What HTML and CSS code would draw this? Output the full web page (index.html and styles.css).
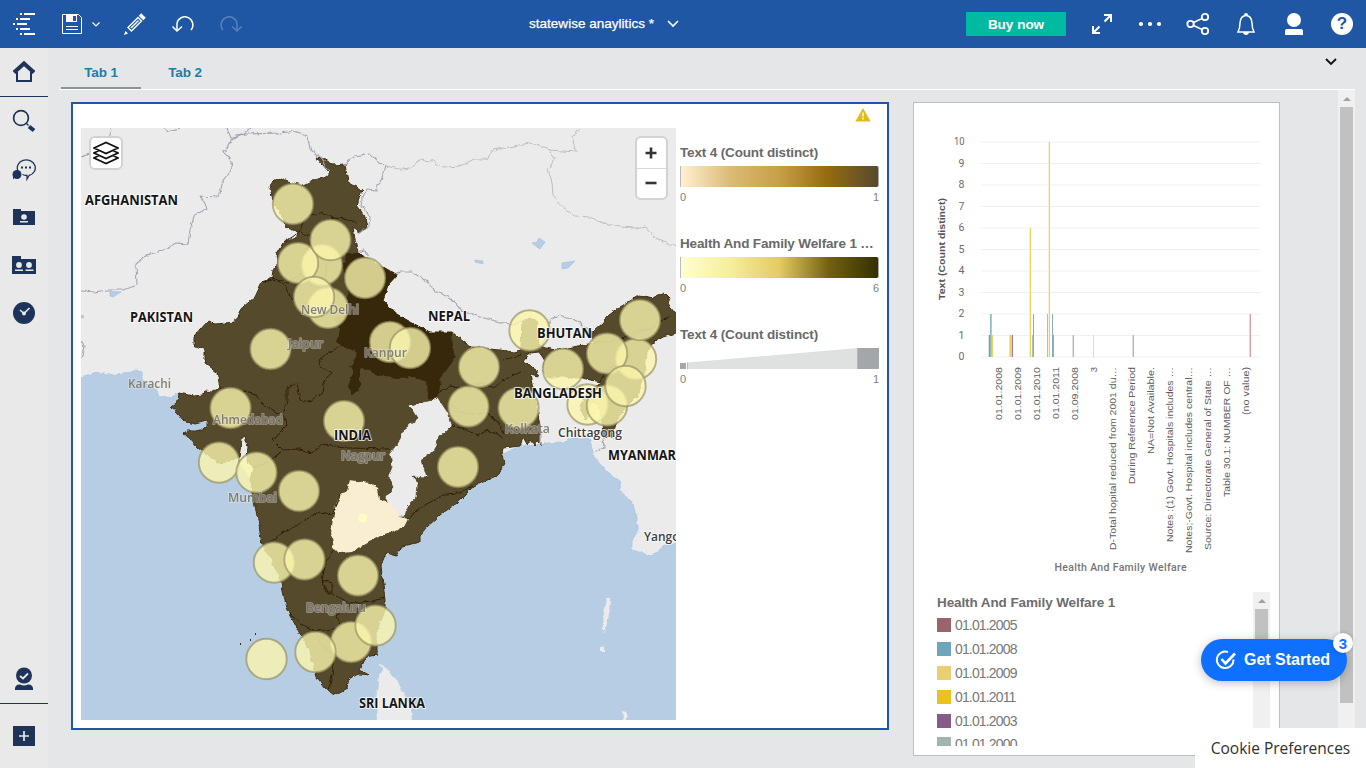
FILE: index.html
```html
<!DOCTYPE html>
<html lang="en">
<head>
<meta charset="utf-8">
<title>statewise anaylitics</title>
<link rel="stylesheet" href="styles.css">
</head>
<body>
<div class="app">
  <header class="topbar">
    <button class="cell"><svg width="24" height="24" viewBox="0 0 24 24" fill="#fff"><path d="M8 1h2v2H8zM12 1h11v2H12zM4 6h2v2H4zM8 6h10v2H8zM1 11h2v2H1zM5 11h10v2H5zM4 16h2v2H4zM8 16h10v2H8zM8 21h2v2H8zM12 21h11v2H12z"/></svg></button>
    <button class="cell save"><svg width="20" height="20" viewBox="0 0 20 20"><path d="M.5.5h16l3 3v16H.5z" fill="none" stroke="#fff"/><path d="M4 1h11v7H4z" fill="#fff"/><path d="M11 2h3v5h-3z" fill="#1f57a4"/><path d="M4 12.5h12M4 15.5h12" stroke="#fff"/></svg><svg width="8" height="5" viewBox="0 0 8 5"><path d="M.5.5 4 4 7.500.5" fill="none" stroke="#fff" stroke-width="1.2"/></svg></button>
    <button class="cell"><svg width="24" height="24" viewBox="0 0 24 24" fill="none" stroke="#fff" stroke-width="1.400"><path d="m5 15.500 10-10 3.500 3.500-10 10z"/><path d="m8 16 7.500-7.500"/><path d="m17 2.500 4.500 4.500" stroke-width="3.600"/><path d="m2.500 19 2.500 2.500-4 1.500z" fill="#fff" stroke="none"/></svg></button>
    <button class="cell"><svg width="24" height="20" viewBox="0 0 24 20" fill="none" stroke="#fff" stroke-width="1.5"><path d="M6 17V9.500a8 8 0 1 1 14 6.500"/><path d="m1.500 12.500 4.500 4.500 5-4.500"/></svg></button>
    <button class="cell disabled"><svg width="24" height="20" viewBox="0 0 24 20" fill="none" stroke="#fff" stroke-width="1.5"><path d="M18 17V9.500A8 8 0 1 0 4 16"/><path d="m22.500 12.500-4.500 4.500-5-4.500"/></svg></button>
    <div class="title"><span>statewise anaylitics *</span><svg width="12" height="8" viewBox="0 0 12 8"><path d="m1 1 5 5 5-5" fill="none" stroke="#fff" stroke-width="1.6"/></svg></div>
    <button class="buy">Buy now</button>
    <button class="cell"><svg width="20" height="20" viewBox="0 0 20 20" fill="none" stroke="#fff" stroke-width="2"><path d="M12 1h7v7M19 1l-6.500 6.500M1 12v7h7M1 19l6.500-6.500"/></svg></button>
    <button class="cell"><svg width="24" height="6" viewBox="0 0 24 6" fill="#fff"><circle cx="3" cy="3" r="2.100"/><circle cx="12" cy="3" r="2.100"/><circle cx="21" cy="3" r="2.100"/></svg></button>
    <button class="cell"><svg width="24" height="24" viewBox="0 0 24 24" fill="none" stroke="#fff" stroke-width="1.800"><circle cx="4.500" cy="12" r="3.200"/><circle cx="19" cy="5" r="3.200"/><circle cx="19" cy="19" r="3.200"/><path d="m7.500 10.500 8.500-4M7.500 13.500l8.500 4"/></svg></button>
    <button class="cell"><svg width="20" height="24" viewBox="0 0 20 24"><path d="M2 20c1.500-3 2-5 2-9 0-5 3-7.500 6-7.500s6 2.500 6 7.500c0 4 .5 6 2 9z" fill="none" stroke="#fff" stroke-width="1.500"/><path d="M8 3a2 2 0 0 1 4 0M7 20h6c0 4-6 4-6 0" fill="#fff"/></svg></button>
    <button class="cell"><svg width="20" height="24" viewBox="0 0 20 24" fill="#fff"><circle cx="10" cy="8" r="7"/><path d="M1 23v-4q0-2 2-2h14q2 0 2 2v4z"/></svg></button>
    <button class="cell"><span class="help">?</span></button>
  </header>
  <div class="body">
    <nav class="sidebar">
      <a class="nav home"><svg width="24" height="24" viewBox="0 0 24 24"><path d="M5 12v9h14V12" fill="none" stroke="#1d3458" stroke-width="2"/><path d="m2 12.500 10-9 10 9" fill="none" stroke="#1d3458" stroke-width="4"/></svg></a>
      <a class="nav"><svg width="24" height="24" viewBox="0 0 24 24" fill="none" stroke="#1d3458"><circle cx="9" cy="9" r="7.400" stroke-width="1.700"/><path d="m14.500 14.500 2 2" stroke-width="1.500"/><path d="m17 17.500 5 4" stroke-width="4"/></svg></a>
      <a class="nav"><svg width="24" height="24" viewBox="0 0 24 24"><path d="M17 18.500A9 8 0 1 0 6 14M17 18.500l-2 3.500v-3.500c-2 0-3-.3-4.500-1" fill="none" stroke="#1d3458" stroke-width="1.300"/><circle cx="5" cy="17.500" r="4.500" fill="#1d3458"/><path d="M1 22.500V18h4z" fill="#1d3458"/><path d="M9 9.500h2v2H9zM13 9.500h2v2h-2zM17 9.500h2v2h-2z" fill="#1d3458"/></svg></a>
      <a class="nav"><svg width="22" height="16" viewBox="0 0 22 16"><path d="M0 0h8v2h14v14H0z" fill="#1d3458"/><circle cx="11" cy="8" r="2.800" fill="#e9e9e9"/><path d="M7 12h8v1.500H7z" fill="#e9e9e9"/></svg></a>
      <a class="nav"><svg width="24" height="18" viewBox="0 0 24 18"><path d="M0 0h9v3h15v15H0z" fill="#1d3458"/><circle cx="7" cy="9" r="2.900" fill="#e9e9e9"/><circle cx="17" cy="9" r="2.900" fill="#e9e9e9"/><path d="M3 13.500h8V15H3zM13.500 13.500h8V15h-8z" fill="#e9e9e9"/></svg></a>
      <a class="nav"><svg width="24" height="24" viewBox="0 0 24 24"><circle cx="12" cy="12" r="11" fill="#1d3458"/><path d="m8 9 4 3.500L17.500 7" fill="none" stroke="#e9e9e9" stroke-width="1.600"/><circle cx="12" cy="12.500" r="2" fill="#e9e9e9"/></svg></a>
      <a class="nav learn"><svg width="20" height="24" viewBox="0 0 20 24"><circle cx="10" cy="8.500" r="8" fill="#1d3458"/><path d="m6 9 3 2.500 5-5" fill="none" stroke="#e9e9e9" stroke-width="1.800"/><path d="M1 23v-2q1-4 5-3.500 4 2 8 0 4-.5 5 3.500v2z" fill="#1d3458"/></svg></a>
      <a class="nav add"><svg width="22" height="20" viewBox="0 0 22 20"><path d="M0 0h22v20H0z" fill="#1d3458"/><path d="M11 5v10M6 10h10" stroke="#e9e9e9" stroke-width="1.700"/></svg></a>
    </nav>
    <main class="main">
      <div class="tabs">
        <a class="tab active">Tab 1</a><a class="tab">Tab 2</a>
        <svg class="more" width="12" height="8" viewBox="0 0 12 8"><path d="m1 1 5 5 5-5" fill="none" stroke="#111" stroke-width="1.800"/></svg>
      </div>
      <div class="stage">
        <section class="card mapcard">
          <svg class="warn" width="16" height="14" viewBox="0 0 16 14"><path d="M8 0 15.700 13.500H.3z" fill="#e2bb19"/><path d="M7 4.500h2v4H7zM7 9.500h2v2H7z" fill="#f6e9b0"/></svg>
          <div class="mapwrap">
            <svg class="map" width="595" height="592" viewBox="81 128 595 592">
              <defs>
                <filter id="rough" filterUnits="userSpaceOnUse" x="71" y="118" width="615" height="612" color-interpolation-filters="sRGB"><feTurbulence type="fractalNoise" baseFrequency=".16" numOctaves="3" seed="4"/><feDisplacementMap in="SourceGraphic" scale="4.500" xChannelSelector="R" yChannelSelector="G"/></filter>
              </defs>
              <rect x="81" y="128" width="595" height="592" fill="#b6cde3"/>
              <g filter="url(#rough)">
                <path fill="#ebebeb" stroke="#a4c4e6" stroke-width=".8" d="M71 118H690V540L676 543 671 545 663 547 657 552 651 556 639 552 632 550 632 543 637 532 637 517 632 502 619 490 622 482 608 473 594 457 590 440 587 438 570 438 562 442 547 443 541 445 520 446 400 500 250 480 200 400 179 393 170 397 159 398 157 390 143 382 142 372 137 369 132 372 117 374 107 375 97 372 81 377 71 377Z"/>
                <path fill="#ebebeb" d="M379 664Q386 664 388 672L398 682 405 696 411 706 412 722H377L376 700 379 675 383 669Z"/>
                <path fill="#ebebeb" d="M607 598 610 598 609 615 605 632 602 630 604 613ZM600 646h4v6h-4ZM622 711l5 1v8h-4Z"/>
                <path fill="#564a2d" stroke="#40300f" stroke-width="1" d="M541 445 537 441 534 445 530 440 527 445 523 438 520 446 503 448 502 455 504 463 498 475 483 482 472 488 457 503 440 515 426 528 420 535 420 542 402 546 396 556 386 553 381 565 382 577 385 600 385 610 377 630 377 655 366 657 360 670 369 675 360 674 349 678 347 688 334 695 325 688 317 677 309 650 299 632 289 613 285 600 281 582 270 557 262 545 258 520 253 497 250 480 253 468 247 460 248 447 245 436 242 438 239 457 227 462 217 463 198 448 184 433 187 431 197 431 207 427 207 421 195 424 183 420 173 408 170 407 178 402 179 393 193 396 204 395 205 391 212 392 220 388 217 372 205 363 205 350 194 345 194 337 208 321 215 324 235 322 243 307 255 297 262 282 272 278 273 270 278 263 277 253 283 243 297 237 298 232 285 227 283 217 273 203 272 195 269 187 274 180 283 179 293 183 303 185 313 180 325 178 329 172 316 157 323 159 333 165 345 164 348 182 362 190 357 205 365 217 367 228 360 232 353 227 355 240 358 253 385 268 397 275 388 285 383 300 395 313 407 320 420 327 430 332 452 332 470 347 500 350 513 352 521 350 522 322 530 318 537 322 540 347 557 350 583 345 594 343 588 330 593 332 603 323 605 318 620 307 640 295 653 298 665 293 670 298 668 303 672 310 684 316 684 330 676 333 663 337 653 343 647 353 645 370 637 397 627 407 617 420 612 438 603 437 602 423 599 405 592 402 585 420 580 407 586 394 600 382 577 377 547 377 543 367 545 360 540 352 530 353 523 362 537 370 538 377 530 375 537 407 540 427Z"/>
                <path fill="#38280b" d="M347 253 358 253 385 268 397 275 388 285 383 300 395 313 407 320 420 327 430 332 452 332 453 347 455 358 442 375 438 398 428 400 427 382 413 377 397 378 377 375 360 367 360 387 353 395 348 387 353 372 350 367 358 353 337 343 340 330 333 318 347 313 348 287 343 267Z"/>
                <path fill="#ebebeb" stroke="#40300f" stroke-width=".6" d="M408 405 428 402 438 398 448 413 452 425 440 437 432 453 422 460 427 478 413 477 418 483 417 497 407 507 405 517 398 517 385 498 393 487 388 477 392 467 390 453 400 440 403 430 418 418 413 410Z"/>
                <path fill="#faeed2" d="M350 480 370 483 378 488 380 500 390 502 395 510 400 517 408 519 404 527 382 535 364 545 353 552 339 553 334 548 331 533 333 520 335 507 342 493 347 490Z"/>
                <g fill="none" stroke="#302006" stroke-width="1">
                  <path d="M298 234 305 218 320 213 334 218 347 219 357 223M283 243 300 232 312 238 305 252 313 262M262 282 273 280 285 285 293 300M272 278 288 283 300 274 312 287M347 253 338 256 327 263 325 280M220 388 238 390 254 393 262 403 272 410 283 415 287 425 280 432 273 440 283 450 300 449 312 453 322 444 335 447 350 448 390 449M283 415 287 400 287 388 297 383 300 400 310 402 323 392 325 379 332 373 318 366 321 358 345 342M253 468 265 465 272 459 281 452M262 545 275 540 281 532 291 530 303 521 320 512 333 514 341 495M334 548 326 563 322 580 328 592 340 598 350 603 372 601 385 598M289 613 301 624 315 631 326 630 341 628 337 616 350 605M315 631 322 645 334 655 333 670 329 690M322 580 332 583 332 592 326 592ZM452 425 465 430 478 435 488 430 504 438M438 393 450 386 465 390 480 383 495 388 505 379 520 372M450 405 465 414 485 413 498 421 505 434M407 519 425 505 445 494 460 493 472 486M504 360 521 355M594 343 615 341 635 333 652 327 672 315M600 382 606 370 622 362 635 351M622 362 631 377 642 381M585 420 600 407 616 402"/>
                </g>
              </g>
              <g class="borders" filter="url(#rough)">
                <path d="M81 291 95 292 107 290 124 290 137 285 136 264 147 255 162 251 176 243 188 244 190 230 194 216 207 208 200 196 218 197 222 182 232 168 230 158 224 152 233 139 245 134 280 133 295 131 308 137 312 151 320 157 329 171M227 128 231 138 243 134 253 126M165 128 168 132 179 129M81 157 90 154 108 148 111 128M81 340 84 347 81 358M345 164 354 156 370 154 380 164 385 166 382 178 376 190 366 189 362 198 361 205 370 217 369 227 360 232M358 252 364 250 370 258M397 275 400 272 412 272 426 281 437 292 446 296 454 302 462 311 476 316 500 322 514 325 525 320M542 347 550 320 560 315 580 323 588 331M541 445V430M603 437 604 448 596 451"/>
                <path class="light" d="M385 166 400 169 410 168 420 160 433 161 442 167 460 166 474 159 487 159 493 150 530 143 550 150 555 158 548 170 552 182 553 195 565 210 575 216 590 217 600 222 620 227 636 228 645 226 653 237 670 245 690 246M550 150 576 152 572 137 580 128"/>
              </g>
              <g fill="#b6cde3" stroke="#9cbfe4" stroke-width=".6"><path d="m110 291 11 1-8 5-3-1ZM532 243l5-1 2-4 6 4-5 7-3-2ZM475 260l8 1v3l-8-2ZM562 263l13-2-7 7-6 1ZM81 315l3 1-1 2h-2Z"/></g>
              <g fill="#40300f"><path d="M240 643h1v2h-1ZM250 639h1v2h-1ZM255 633h1v2h-1Z"/></g>
              <g class="bubbles"><circle cx="293" cy="204" r="20.200"/><circle cx="322" cy="265" r="20.200"/><circle cx="298" cy="263" r="20.200"/><circle cx="330.500" cy="240" r="20.200"/><circle cx="365" cy="278" r="20.200"/><circle cx="328" cy="308" r="20.200"/><circle cx="314" cy="297" r="20.200"/><circle cx="270.500" cy="349" r="20.200"/><circle cx="230.500" cy="408" r="20.200"/><circle cx="219" cy="462.500" r="20.200"/><circle cx="256.500" cy="472.500" r="20.200"/><circle cx="299" cy="491" r="20.200"/><circle cx="344" cy="421" r="20.200"/><circle cx="390" cy="342" r="20.200"/><circle cx="410" cy="348" r="20.200"/><circle cx="529.500" cy="330.500" r="20.200"/><circle cx="479" cy="367" r="20.200"/><circle cx="468.500" cy="406.500" r="20.200"/><circle cx="518.500" cy="408" r="20.200"/><circle cx="563" cy="369" r="20.200"/><circle cx="636" cy="359" r="20.200"/><circle cx="607" cy="353.500" r="20.200"/><circle cx="640" cy="320" r="20.200"/><circle cx="587.500" cy="404.500" r="20.200"/><circle cx="607" cy="405.500" r="20.200"/><circle cx="625.500" cy="386" r="20.200"/><circle cx="458" cy="467" r="20.200"/><circle cx="274" cy="562.500" r="20.200"/><circle cx="304.500" cy="559.500" r="20.200"/><circle cx="358" cy="575.500" r="20.200"/><circle cx="351" cy="642" r="20.200"/><circle cx="375.500" cy="625.500" r="20.200"/><circle cx="315.500" cy="652" r="20.200"/><circle cx="266.500" cy="659" r="20.200"/></g>
              <circle cx="362.500" cy="518" r="4.500" fill="#fffcc4"/>
              <g class="cities"><text x="301" y="313.500" textLength="58" lengthAdjust="spacingAndGlyphs">New Delhi</text><text x="288" y="348" textLength="35" lengthAdjust="spacingAndGlyphs">Jaipur</text><text x="364" y="357" textLength="43" lengthAdjust="spacingAndGlyphs">Kanpur</text><text x="128" y="388" textLength="43" lengthAdjust="spacingAndGlyphs">Karachi</text><text x="213" y="424" textLength="70" lengthAdjust="spacingAndGlyphs">Ahmedabad</text><text x="341" y="460" textLength="44" lengthAdjust="spacingAndGlyphs">Nagpur</text><text x="228" y="501.500" textLength="49" lengthAdjust="spacingAndGlyphs">Mumbai</text><text x="505" y="433" textLength="45" lengthAdjust="spacingAndGlyphs">Kolkata</text><text x="306" y="611.500" textLength="60" lengthAdjust="spacingAndGlyphs">Bengaluru</text></g>
              <g class="countries"><text x="85" y="205" textLength="93" lengthAdjust="spacingAndGlyphs">AFGHANISTAN</text><text x="130" y="322" textLength="63" lengthAdjust="spacingAndGlyphs">PAKISTAN</text><text x="428" y="321" textLength="42" lengthAdjust="spacingAndGlyphs">NEPAL</text><text x="537" y="338" textLength="55" lengthAdjust="spacingAndGlyphs">BHUTAN</text><text x="514" y="398" textLength="88" lengthAdjust="spacingAndGlyphs">BANGLADESH</text><text x="334" y="440" textLength="37" lengthAdjust="spacingAndGlyphs">INDIA</text><text x="608" y="459.500" textLength="68" lengthAdjust="spacingAndGlyphs">MYANMAR</text><text x="359" y="708" textLength="66" lengthAdjust="spacingAndGlyphs">SRI LANKA</text><text class="town" x="558" y="437" textLength="64" lengthAdjust="spacingAndGlyphs">Chittagong</text><text class="town" x="644" y="541" textLength="43" lengthAdjust="spacingAndGlyphs">Yangon</text></g>
            </svg>
            <button class="layers"><svg width="26" height="24" viewBox="0 0 26 24" fill="none" stroke="#111" stroke-width="1.800"><path d="M1 7 13 1.500 25 7l-12 5.500zM6 9.500 1 12l12 5.500L25 12l-5-2.500M6 14.500 1 17l12 5.500L25 17l-5-2.500"/></svg></button>
            <div class="zoom"><button><svg width="12" height="12" viewBox="0 0 12 12"><path d="M6 .5v11M.5 6h11" stroke="#333" stroke-width="2.600"/></svg></button><button><svg width="12" height="12" viewBox="0 0 12 12"><path d="M.5 6h11" stroke="#333" stroke-width="2.600"/></svg></button></div>
          </div>
          <div class="legends">
            <div class="legend"><h3>Text 4 (Count distinct)</h3><div class="ramp ramp-a"></div><div class="ends"><span>0</span><span>1</span></div></div>
            <div class="legend"><h3>Health And Family Welfare 1 …</h3><div class="ramp ramp-b"></div><div class="ends"><span>0</span><span>6</span></div></div>
            <div class="legend"><h3>Text 4 (Count distinct)</h3><svg class="size" width="199" height="21" viewBox="0 0 199 21"><path d="M7 14.500 178 0v21H7z" fill="#dfe1e1"/><path d="M7.500 14.500V21M177.500 0v21" stroke="#b5b8b9"/><path d="M0 15h6v6H0zM178 0h21v21h-21z" fill="#a4a7aa"/></svg><div class="ends"><span>0</span><span>1</span></div></div>
          </div>
        </section>
        <section class="card chartcard">
          <svg class="chart" width="365" height="484" viewBox="914 103 365 484">
            <g class="grid"><path d="M981 142h279M981 185h279M981 228h279M981 271h279M981 314h279M981 357h279" stroke="#f8f8f8" stroke-width="2"/><path d="M981 163.500h279M981 206.500h279M981 249.500h279M981 292.500h279M981 335.500h279" stroke="#f0f0f0"/></g>
            <g class="ticks"><text x="964.500" y="145" textLength="10.500" lengthAdjust="spacingAndGlyphs">10</text><text x="964.500" y="167">9</text><text x="964.500" y="188">8</text><text x="964.500" y="210">7</text><text x="964.500" y="231">6</text><text x="964.500" y="253">5</text><text x="964.500" y="274">4</text><text x="964.500" y="296">3</text><text x="964.500" y="317">2</text><text x="964.500" y="339">1</text><text x="964.500" y="360">0</text></g>
            <g><path fill="#e0e0e0" d="M988 335h1v22h-1zM1009 335h1v22h-1zM1072 335h1v22h-1zM1132 335h1v22h-1z"/><path fill="#a58c9b" d="M989 335h1v22h-1z"/><path fill="#8dbcc2" d="M990 314h1v43h-1z"/><path fill="#b8ccb0" d="M991 314h1v43h-1z"/><path fill="#f3d25a" d="M992 335h1v22h-1zM1010 335h2v22h-2zM1030 228h1v129h-1zM1049 142h1v215h-1z"/><path fill="#fbf0d0" d="M1029 228h1v129h-1zM1048 142h1v215h-1z"/><path fill="#a67da8" d="M1012 335h1v22h-1z"/><path fill="#a5c5b5" d="M1032 335h1v22h-1zM1047 314h1v43h-1z"/><path fill="#87aebf" d="M1033 314h1v43h-1zM1052 314h1v43h-1z"/><path fill="#c99894" d="M1053 335h1v22h-1z"/><path fill="#b6be83" d="M1073 335h1v22h-1zM1133 335h1v22h-1z"/><path fill="#ecdfa5" d="M1093 335h1v22h-1z"/><path fill="#d99ca0" d="M1250 314h1v43h-1z"/><path fill="#eed8d8" d="M1249 314h1v43h-1z"/></g>
            <text class="ylab" transform="translate(945 300) rotate(-90)" textLength="102" lengthAdjust="spacingAndGlyphs">Text (Count distinct)</text>
            <g class="xlab">
              <text transform="translate(1002 367) rotate(-90)" textLength="53" lengthAdjust="spacingAndGlyphs">01.01.2008</text><text transform="translate(1021 367) rotate(-90)" textLength="53" lengthAdjust="spacingAndGlyphs">01.01.2009</text><text transform="translate(1040 367) rotate(-90)" textLength="53" lengthAdjust="spacingAndGlyphs">01.01.2010</text><text transform="translate(1059 367) rotate(-90)" textLength="52" lengthAdjust="spacingAndGlyphs">01.01.2011</text><text transform="translate(1078 367) rotate(-90)" textLength="53" lengthAdjust="spacingAndGlyphs">01.09.2008</text><text transform="translate(1097 367) rotate(-90)">3</text><text transform="translate(1116 367) rotate(-90)" textLength="183" lengthAdjust="spacingAndGlyphs">D-Total hopital reduced from 2001 du…</text><text transform="translate(1135 367) rotate(-90)" textLength="117" lengthAdjust="spacingAndGlyphs">During Reference Period</text><text transform="translate(1154 367) rotate(-90)" textLength="87" lengthAdjust="spacingAndGlyphs">NA=Not Available.</text><text transform="translate(1173 367) rotate(-90)" textLength="175" lengthAdjust="spacingAndGlyphs">Notes :(1) Govt. Hospitals includes …</text><text transform="translate(1192 367) rotate(-90)" textLength="186" lengthAdjust="spacingAndGlyphs">Notes;-Govt. Hospital includes central…</text><text transform="translate(1211 367) rotate(-90)" textLength="183" lengthAdjust="spacingAndGlyphs">Source: Directorate General of State …</text><text transform="translate(1230 367) rotate(-90)" textLength="130" lengthAdjust="spacingAndGlyphs">Table 30.1: NUMBER OF …</text><text transform="translate(1249 367) rotate(-90)" textLength="48" lengthAdjust="spacingAndGlyphs">(no value)</text>
            </g>
            <text class="xtitle" x="1054.500" y="571" textLength="132">Health And Family Welfare</text>
          </svg>
          <div class="series">
            <div class="list"><h3>Health And Family Welfare 1</h3><ul><li><i class="c1"></i>01.01.2005</li><li><i class="c2"></i>01.01.2008</li><li><i class="c3"></i>01.01.2009</li><li><i class="c4"></i>01.01.2011</li><li><i class="c5"></i>01.01.2003</li><li><i class="c6"></i>01.01.2000</li></ul></div>
            <div class="bar"><span class="up"></span><span class="thumb"></span></div>
          </div>
        </section>
        <div class="bar pagebar"><span class="up"></span><span class="thumb"></span></div>
      </div>
    </main>
  </div>
  <button class="started"><svg width="22" height="20" viewBox="0 0 22 20" fill="none" stroke="#fff"><path d="M13 2a8.300 8.300 0 1 0 5.500 7.500" stroke-width="2"/><path d="m6.500 9 4 4.500L20 3.500" stroke-width="2.600"/></svg><span>Get Started</span><b>3</b></button>
  <a class="cookie">Cookie Preferences</a>
</div>
</body>
</html>
```

FILE: styles.css
```css
* { box-sizing: border-box; }
body { margin: 0; font-family: "Liberation Sans", Arial, sans-serif; background: #e5e6e8; overflow: hidden; }
button { border: 0; padding: 0; background: none; font: inherit; }
svg { display: block; }
h3, ul { margin: 0; padding: 0; list-style: none; }
.app { position: relative; width: 1366px; height: 768px; display: flex; flex-direction: column; overflow: hidden; }
.topbar { height: 48px; flex: none; display: flex; align-items: center; background: #1f57a4; color: #fff; }
.cell { width: 48px; height: 48px; display: flex; align-items: center; justify-content: center; flex: none; }
.save { width: 63px; justify-content: flex-start; padding-left: 14px; gap: 10px; }
.disabled { opacity: .25; }
.title { margin-left: 274px; display: flex; align-items: center; gap: 13px; font-size: 13.500px; letter-spacing: .02px; -webkit-text-stroke: .25px #fff; white-space: nowrap; }
.title span { position: relative; top: -1px; }
.buy { margin: 0 12px 0 auto; width: 100px; height: 24px; background: #00baa1; color: #fff; font: bold 13.500px "Liberation Sans", sans-serif; }
.help { width: 22px; height: 22px; border-radius: 50%; background: #fff; color: #1f57a4; font: bold 17px/22px "Liberation Sans", sans-serif; text-align: center; }
.body { flex: 1; min-height: 0; display: flex; }
.sidebar { width: 48px; flex: none; background: #e9e9e9; display: flex; flex-direction: column; }
.nav { height: 48px; display: flex; align-items: center; justify-content: center; }
.home { height: 49px; border-bottom: 1px solid #1d3458; }
.learn { margin-top: auto; height: 49px; border-bottom: 1px solid #1d3458; }
.add { height: 64px; }
.main { flex: 1; min-width: 0; display: flex; flex-direction: column; padding: 0 11px; }
.tabs { height: 42px; display: flex; align-items: flex-start; border-bottom: 1px solid #fff; padding-left: 2px; }
.tab { height: 41px; width: 80px; margin-right: 4px; text-align: center; color: #1b7dab; font: bold 13.500px/49px "Liberation Sans", sans-serif; letter-spacing: -.15px; }
.active { border-bottom: 2px solid #899594; }
.more { margin: 10px 18px 0 auto; }
.stage { flex: 1; min-height: 0; display: flex; align-items: flex-start; padding: 12px 0 0 12px; }
.card { background: #fff; flex: none; }
.mapcard { position: relative; width: 818px; height: 628px; border: 2px solid #1f57a4; padding: 24px 8px 0; display: flex; gap: 4px; }
.warn { position: absolute; right: 16px; top: 4px; }
.mapwrap { position: relative; width: 595px; height: 592px; }
.layers { position: absolute; left: 8px; top: 8px; width: 34px; height: 34px; border: 2px solid #d2d2d2; border-radius: 6px; background: #fff; display: flex; align-items: center; justify-content: center; }
.zoom { position: absolute; right: 8px; top: 8px; width: 33px; height: 64px; border: 2px solid #d2d2d2; border-radius: 6px; background: #fff; display: flex; flex-direction: column; }
.zoom button { flex: 1; display: flex; align-items: center; justify-content: center; padding-right: 1px; }
.zoom button + button { border-top: 1px solid #d8d8d8; }
.borders { fill: none; stroke: #a6a5b2; stroke-width: 1.100; }
.borders .light { stroke: #bdbdc2; stroke-width: 1; }
.bubbles { fill: rgba(250, 245, 173, .8); stroke: rgba(151, 145, 98, .68); stroke-width: 1.900; }
.map text { font-family: "Open Sans", "Noto Sans", sans-serif; paint-order: stroke; stroke-linejoin: round; }
.cities { font-size: 13px; fill: #7a7770; stroke: rgba(238, 236, 226, .45); stroke-width: 2px; font-weight: 600; opacity: .92; }
.countries { font-size: 13.500px; font-weight: 700; fill: #151515; stroke: rgba(255, 255, 255, .75); stroke-width: 2px; }
.countries .town { font-size: 13px; font-weight: 600; fill: #3c3c3c; }
.legends { width: 199px; padding-top: 16px; color: #69696b; }
.legend { height: 91px; }
.legend h3 { font-size: 13.500px; line-height: 17px; letter-spacing: -.15px; white-space: nowrap; }
.ramp, .size { margin-top: 5px; height: 21px; }
.ramp { border-left: 1px solid #bbb; border-right: 1px solid #aaa; border-radius: 0 2px 2px 0; }
.ramp-a { background: linear-gradient(90deg, #fff0d2, #dcba76 25%, #c89f48 50%, #946a10 75%, #564a2e); }
.ramp-b { background: linear-gradient(90deg, #ffffd0, #f5ee9e 25%, #e4ca63 50%, #746013 75%, #343000); }
.ends { display: flex; justify-content: space-between; font-size: 11px; line-height: 13px; margin-top: 4px; color: #808080; }
.chartcard { width: 367px; height: 654px; border: 1px solid #bdc0c2; margin-left: 24px; }
.ticks { font-family: Roboto, sans-serif; font-size: 10.500px; fill: #6b6b6b; text-anchor: end; }
.ylab { font-size: 9px; font-weight: 700; fill: #545454; }
.xlab { font-size: 9.500px; fill: #5d5d5d; text-anchor: end; }
.xtitle { font: 10.500px Roboto, sans-serif; font-weight: 500; fill: #757575; }
.series { display: flex; justify-content: space-between; padding: 5px 9px 0 23px; height: 159px; }
.list { height: 154px; overflow: hidden; color: #77787a; }
.list h3 { font-size: 13.500px; line-height: 21px; letter-spacing: -.1px; color: #6c6d6f; }
.list ul { margin-top: -1px; }
.list li { display: flex; align-items: center; gap: 4px; height: 23.800px; font-size: 14px; letter-spacing: -.85px; padding-top: 3px; }
.list i { width: 14px; height: 14px; }
.c1 { background: #9b636c; } .c2 { background: #6da5bb; } .c3 { background: #ebcd72; }
.c4 { background: #ebc11c; } .c5 { background: #865b88; } .c6 { background: #a2b6ae; }
.bar { width: 17px; background: #f0f0f0; display: flex; flex-direction: column; align-items: center; height: 154px; }
.up { width: 0; height: 0; margin: 7px 0 6px; border: 4px solid transparent; border-top: 0; border-bottom: 4px solid #a0a0a0; }
.thumb { width: 13px; height: 60px; background: #c1c1c1; }
.pagebar { margin: -12px 0 0 auto; height: 678px; }
.pagebar .thumb { height: 596px; }
.started { position: absolute; left: 1201px; top: 639px; width: 146px; height: 42px; border-radius: 21px; background: #0f6fff; color: #fff; box-shadow: 0 2px 10px rgba(0, 0, 0, .25); display: flex; align-items: center; gap: 7px; padding-left: 14px; font-size: 16px; font-weight: 700; white-space: nowrap; }
.started span { letter-spacing: -.02px; }
.started b { position: absolute; right: -6px; top: -6px; width: 20px; height: 20px; border-radius: 50%; background: #fff; color: #0f6fff; font-size: 15px; line-height: 21px; box-shadow: 0 0 4px rgba(0, 0, 0, .2); }
.cookie { position: absolute; right: 0; bottom: 0; width: 171px; height: 40px; background: #fff; color: #303030; font: 15.500px/41px "Open Sans", sans-serif; text-align: center; white-space: nowrap; }
```
